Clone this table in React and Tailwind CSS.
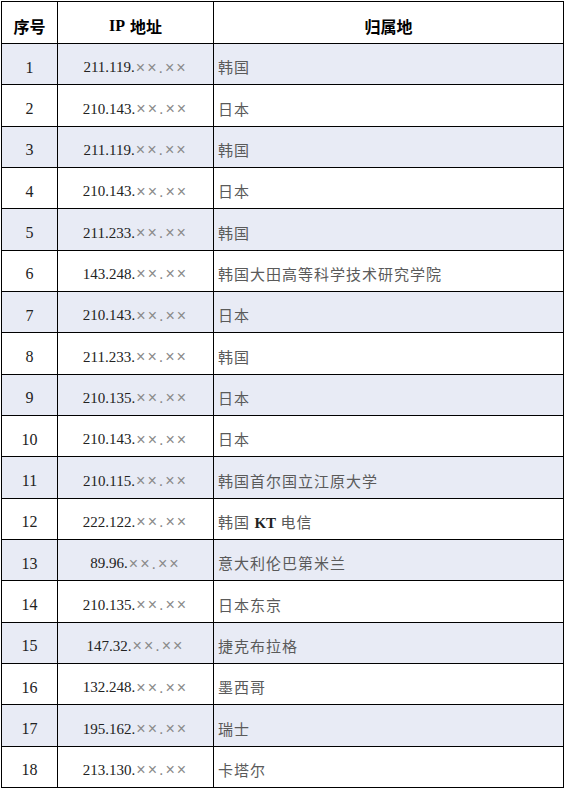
import React from 'react';

// IP 归属表
const rows = [
    { no: 1, ip: '211.119', place: '韩国' },
    { no: 2, ip: '210.143', place: '日本' },
    { no: 3, ip: '211.119', place: '韩国' },
    { no: 4, ip: '210.143', place: '日本' },
    { no: 5, ip: '211.233', place: '韩国' },
    { no: 6, ip: '143.248', place: '韩国大田高等科学技术研究学院' },
    { no: 7, ip: '210.143', place: '日本' },
    { no: 8, ip: '211.233', place: '韩国' },
    { no: 9, ip: '210.135', place: '日本' },
    { no: 10, ip: '210.143', place: '日本' },
    { no: 11, ip: '210.115', place: '韩国首尔国立江原大学' },
    { no: 12, ip: '222.122', place: 'KT' },
    { no: 13, ip: '89.96', place: '意大利伦巴第米兰' },
    { no: 14, ip: '210.135', place: '日本东京' },
    { no: 15, ip: '147.32', place: '捷克布拉格' },
    { no: 16, ip: '132.248', place: '墨西哥' },
    { no: 17, ip: '195.162', place: '瑞士' },
    { no: 18, ip: '213.130', place: '卡塔尔' },
];

const serif = "font-['Liberation_Serif','Noto_Sans_CJK_SC',serif]";
const cjk = "font-['Noto_Sans_CJK_SC',sans-serif]";

const Place = ({ place }) => {
    if (place === 'KT') {
        return (
            <span>
                韩国 <span className={`${serif} font-bold text-[#222] tracking-normal`}>KT</span> 电信
            </span>
        );
    }
    return <span>{place}</span>;
};

const Row = ({ row }) => {
    const bg = row.no % 2 === 1 ? 'bg-[#e8ebf5]' : 'bg-white';
    const cell = `${bg} border-r border-b border-black flex items-center pt-[7px]`;
    return (
        <>
            <div className={`${cell} justify-center ${serif} text-[16px] text-[#222]`}>{row.no}</div>
            <div className={`${cell} justify-center ${serif} text-[15px] text-[#222]`}>
                <span>{row.ip}.</span>
                <span className="font-['Liberation_Sans',sans-serif] text-[16px] leading-none text-[#8a8a8a] tracking-[2px] ml-[1px]">××.××</span>
            </div>
            <div className={`${cell} pl-[4px] ${cjk} text-[15px] text-[#5a5a5a] tracking-[1px]`}>
                <Place place={row.place} />
            </div>
        </>
    );
};

export default function App() {
    return (
        <div className="bg-white w-[568px] h-[790px] pt-px pl-px">
            <div className="grid grid-cols-[56px_156px_350px] grid-rows-[42px_repeat(18,minmax(0,1fr))] h-[787px] w-[563px] border-l border-t border-black">
                <div className={`border-r border-b border-black flex items-center justify-center pt-[7px] ${cjk} font-bold text-[16px] text-black`}>序号</div>
                <div className={`border-r border-b border-black flex items-center justify-center pt-[7px] ${cjk} font-bold text-[16px] text-black`}>
                    <span className={`${serif} font-bold text-[16px] mr-[5px]`}>IP</span>地址
                </div>
                <div className={`border-r border-b border-black flex items-center justify-center pt-[7px] ${cjk} font-bold text-[16px] text-black`}>归属地</div>
                {rows.map(row => (
                    <Row key={row.no} row={row} />
                ))}
            </div>
        </div>
    );
}
